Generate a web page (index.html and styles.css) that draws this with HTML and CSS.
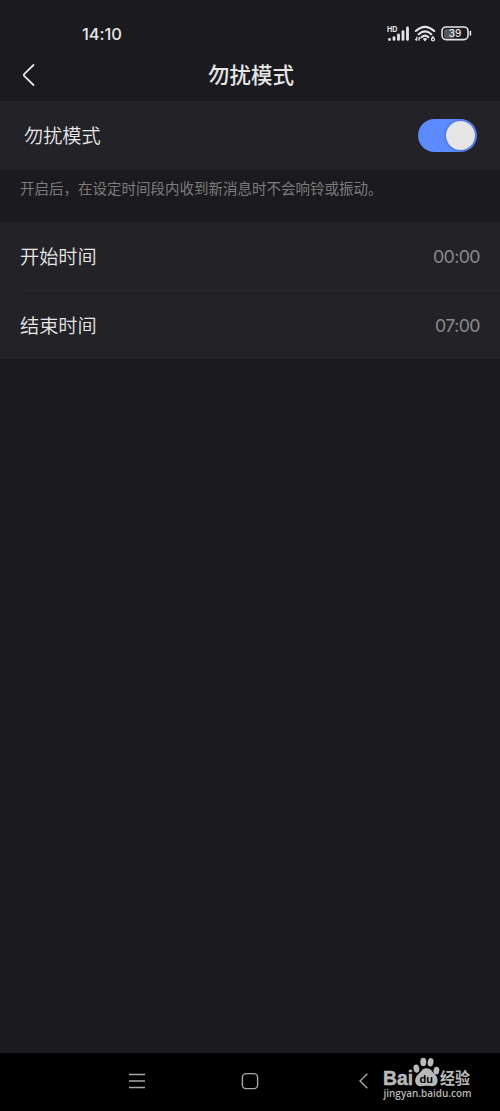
FILE: index.html
```
<!DOCTYPE html>
<html lang="zh-CN">
<head>
  <meta charset="UTF-8">
  <title>勿扰模式</title>
  <link rel="stylesheet" href="styles.css">
</head>
<body>

  <div class="status-bar">
    <span class="clock">14:10</span>
    <div class="status-icons">
      <svg class="signal" width="24" height="18" viewBox="0 0 24 18">
        <text x="0" y="6.6" class="hd" textLength="10.5" lengthAdjust="spacingAndGlyphs">HD</text>
        <g stroke="#e6e6e8" stroke-width="2.8" stroke-linecap="round">
          <path d="M2.5 14.4v.1M7 12.6v1.8M11.5 9.8v4.6M16 6.6v7.8M20.5 3v11.4"/>
        </g>
      </svg>
      <svg class="wifi" width="22" height="18" viewBox="0 0 22 18">
        <g fill="none" stroke="#e6e6e8" stroke-width="2.1" stroke-linecap="round">
          <path d="M1.8 6Q11 -2.4 20.2 6M4.7 9.2Q11 3.6 17.3 9.2M7.6 12.1Q11 9 14.4 12.1"/>
        </g>
        <path d="M8.7 13.7Q11 12.3 13.3 13.7L11 16.4z" fill="#e6e6e8"/>
        <path d="M2.8 11.8v3.6M1.2 14l1.6 1.5M5 15.8v-3.6M5 12.2l1.5 1.4" fill="none" stroke="#e6e6e8" stroke-width="1.2"/>
        <path d="M19.4 11.2L17.8 13.6" stroke="#e6e6e8" stroke-width="1.3"/>
        <circle cx="19" cy="14.4" r="1.5" fill="none" stroke="#e6e6e8" stroke-width="1.3"/>
      </svg>
      <svg class="battery" width="31" height="16" viewBox="0 0 31 16">
        <rect x="3" y="3" width="10.5" height="9" rx="2" fill="#56565a"/>
        <rect x="1" y="1" width="26" height="12.6" rx="4" fill="none" stroke="#e6e6e8" stroke-width="1.6"/>
        <path d="M29.4 5.6v3.4" stroke="#e6e6e8" stroke-width="1.6" stroke-linecap="round"/>
        <text x="14" y="11" class="level" text-anchor="middle">39</text>
      </svg>
    </div>
  </div>

  <div class="header">
    <svg class="back" width="14" height="24" viewBox="0 0 14 24">
      <path d="M11.5 2L2.4 10.8Q1.2 12 2.4 13.2L11.5 22"/>
    </svg>
    <h1>勿扰模式</h1>
  </div>

  <div class="row row-switch">
    <span class="label">勿扰模式</span>
    <span class="switch"><span class="knob"></span></span>
  </div>

  <p class="hint">开启后，在设定时间段内收到新消息时不会响铃或振动。</p>

  <div class="times">
    <div class="row">
      <span class="label">开始时间</span>
      <span class="value">00:00</span>
    </div>
    <div class="divider"></div>
    <div class="row">
      <span class="label">结束时间</span>
      <span class="value">07:00</span>
    </div>
  </div>

  <div class="nav-bar">
    <svg width="18" height="18" viewBox="0 0 18 18">
      <path d="M1 2.5h16M1 9h16M1 15.5h16"/>
    </svg>
    <svg width="18" height="18" viewBox="0 0 18 18">
      <rect x="1.4" y="1.6" width="15.2" height="15" rx="3.6"/>
    </svg>
    <svg width="18" height="18" viewBox="0 0 18 18">
      <path d="M13.4 1.8L6 9l7.4 7.2"/>
    </svg>
  </div>

  <div class="watermark">
    <svg width="92" height="48" viewBox="0 0 92 48">
      <g fill="#b9b9b9">
        <ellipse cx="33.4" cy="13.6" rx="2.9" ry="4.1" transform="rotate(-10 33.4 13.6)"/>
        <ellipse cx="40.3" cy="6.9" rx="3" ry="4.2"/>
        <ellipse cx="47.6" cy="7.3" rx="2.9" ry="4.2" transform="rotate(10 47.6 7.3)"/>
        <ellipse cx="53.4" cy="15.6" rx="2.9" ry="3.9" transform="rotate(8 53.4 15.6)"/>
        <path d="M43.4 13.2C47.8 13.2 49 16.6 51.8 19.2C56.4 23.4 55 31 49.8 31.2C46.8 31.3 45.6 30.8 43.5 30.8C41.3 30.8 40 31.3 37.1 31.2C31.4 31 30.6 23.4 35 19.6C38.3 16.8 39 13.2 43.4 13.2z"/>
        <text x="0" y="30" class="bai" textLength="30" lengthAdjust="spacingAndGlyphs">Bai</text>
        <text x="57" y="28.7" class="jy" textLength="30" lengthAdjust="spacingAndGlyphs">经验</text>
        <text x="0.5" y="42" class="url" textLength="88" lengthAdjust="spacingAndGlyphs">jingyan.baidu.com</text>
      </g>
      <text x="43.3" y="27.6" class="du" text-anchor="middle">du</text>
    </svg>
  </div>

</body>
</html>
```
FILE: styles.css
```
* {
  box-sizing: border-box;
}
body {
  margin: 0;
  height: 1111px;
  display: flex;
  flex-direction: column;
  position: relative;
  overflow: hidden;
  background-color: #1b1a1e;
  color: #e6e6e6;
  font-family: "Noto Sans CJK SC", sans-serif;
}
.status-bar {
  height: 50px;
  padding: 18px 28px 0 82px;
  display: flex;
  justify-content: space-between;
}
.clock {
  font-family: Inter, sans-serif;
  font-size: 16.5px;
  line-height: 33px;
  font-weight: 500;
  letter-spacing: -0.1px;
}
.status-icons {
  display: flex;
  padding-top: 7px;
}
.wifi {
  margin-left: 3px;
}
.battery {
  margin-left: 5px;
  margin-top: 1px;
}
.hd {
  font: bold 7.5px Inter, sans-serif;
  fill: #e6e6e8;
}
.level {
  font: 500 10px Inter, sans-serif;
  fill: #e6e6e8;
}
.header {
  height: 51px;
  padding: 0 22px 2px;
  display: grid;
  grid-template-columns: 14px 1fr 12px;
  align-items: center;
}
.back {
  fill: none;
  stroke: #e6e6e8;
  stroke-width: 1.8;
  stroke-linecap: round;
}
h1 {
  margin: 0;
  padding-bottom: 2px;
  font-size: 21.5px;
  line-height: 46px;
  font-weight: 500;
  text-align: center;
}
.row {
  height: 68px;
  padding: 0 20px;
  display: flex;
  align-items: center;
  justify-content: space-between;
  background-color: #232227;
}
.row-switch {
  height: 69px;
  padding: 0 23px 0 24px;
}
.label {
  padding-bottom: 1px;
  font-size: 19.2px;
  font-weight: 350;
}
.value {
  color: #8b8b8c;
  font-family: Inter, sans-serif;
  font-size: 17.8px;
  letter-spacing: -0.6px;
}
.switch {
  width: 59px;
  height: 33px;
  padding: 2px;
  display: flex;
  justify-content: flex-end;
  border-radius: 17px;
  background-color: #5c8aff;
}
.knob {
  width: 29px;
  height: 29px;
  border-radius: 50%;
  background-color: #e6e6e6;
  box-shadow: 0 0 3px rgba(0, 0, 0, 0.4);
}
.hint {
  margin: 0;
  height: 52px;
  padding: 7px 20px;
  color: #7c7c7d;
  font-size: 14.5px;
  line-height: 22px;
  white-space: nowrap;
}
.times {
  background-color: #232227;
}
.divider {
  height: 1px;
  margin-left: 20px;
  background-color: #2a292e;
}
.nav-bar {
  height: 58px;
  margin-top: auto;
  padding: 19px 128px 0;
  display: flex;
  justify-content: space-between;
  background-color: #000;
}
.nav-bar svg {
  fill: none;
  stroke: #a8a8a8;
  stroke-width: 1.4;
}
/* site mark over the navigation bar */
.watermark {
  position: absolute;
  left: 383px;
  top: 1055px;
}
.bai {
  font: bold 21px "Liberation Sans", sans-serif;
  stroke: #b9b9b9;
  stroke-width: 0.5;
}
.du {
  font: bold 11px "Liberation Sans", sans-serif;
  fill: #000;
}
.jy {
  font: 700 15.5px "Noto Sans CJK SC", sans-serif;
}
.url {
  font: 600 10.5px "Open Sans", sans-serif;
}
```
